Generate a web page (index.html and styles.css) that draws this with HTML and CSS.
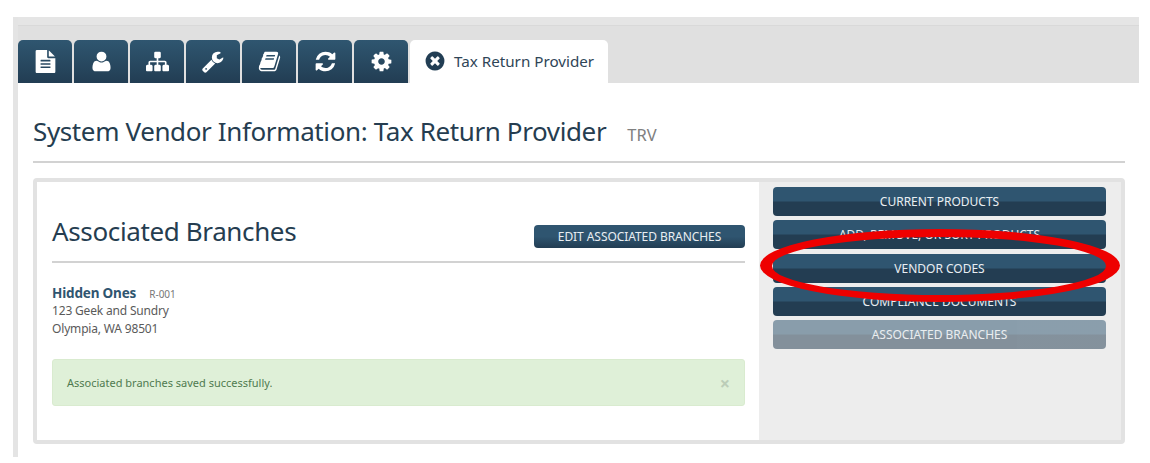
FILE: index.html
```html
<!DOCTYPE html>
<html lang="en">
<head>
<meta charset="utf-8">
<title>System Vendor Information</title>
<link rel="stylesheet" href="styles.css">
</head>
<body>
<div class="frame">
  <header class="tabbar">
    <div class="tabs">
      <a class="tab"><svg class="ico" viewBox="0 0 1792 1792"><path d="M1596 476q14 14 28 36h-472v-472q22 14 36 28zm-476 164h544v1056q0 40-28 68t-68 28h-1344q-40 0-68-28t-28-68v-1600q0-40 28-68t68-28h800v544q0 40 28 68t68 28zm160 736v-64q0-14-9-23t-23-9h-704q-14 0-23 9t-9 23v64q0 14 9 23t23 9h704q14 0 23-9t9-23zm0-256v-64q0-14-9-23t-23-9h-704q-14 0-23 9t-9 23v64q0 14 9 23t23 9h704q14 0 23-9t9-23zm0-256v-64q0-14-9-23t-23-9h-704q-14 0-23 9t-9 23v64q0 14 9 23t23 9h704q14 0 23-9t9-23z"/></svg></a>
      <a class="tab"><svg class="ico" viewBox="0 0 1792 1792"><path d="M1600 1405q0 120-73 189.500t-194 69.500h-874q-121 0-194-69.500t-73-189.500q0-53 3.500-103.500t14-109 26.500-108.500 43-97.500 62-81 85.500-53.500 111.500-20q9 0 42 21.500t74.500 48 108 48 133.500 21.500 133.500-21.500 108-48 74.500-48 42-21.500q61 0 111.500 20t85.500 53.500 62 81 43 97.500 26.500 108.500 14 109 3.500 103.500zm-320-893q0 159-112.500 271.500t-271.500 112.500-271.500-112.500-112.500-271.500 112.500-271.500 271.500-112.500 271.500 112.500 112.500 271.500z"/></svg></a>
      <a class="tab"><svg class="ico" viewBox="0 0 1792 1792"><path d="M1792 1248v320q0 40-28 68t-68 28h-320q-40 0-68-28t-28-68v-320q0-40 28-68t68-28h96v-192h-512v192h96q40 0 68 28t28 68v320q0 40-28 68t-68 28h-320q-40 0-68-28t-28-68v-320q0-40 28-68t68-28h96v-192h-512v192h96q40 0 68 28t28 68v320q0 40-28 68t-68 28h-320q-40 0-68-28t-28-68v-320q0-40 28-68t68-28h96v-192q0-52 38-90t90-38h512v-192h-96q-40 0-68-28t-28-68v-320q0-40 28-68t68-28h320q40 0 68 28t28 68v320q0 40-28 68t-68 28h-96v192h512q52 0 90 38t38 90v192h96q40 0 68 28t28 68z"/></svg></a>
      <a class="tab"><svg class="ico" viewBox="0 0 1792 1792"><path d="M384 1472q0-26-19-45t-45-19-45 19-19 45 19 45 45 19 45-19 19-45zm644-420l-682 682q-37 37-90 37-52 0-91-37l-106-108q-38-36-38-90 0-53 38-91l681-681q39 98 114.500 173.500t173.500 114.500zm634-435q0 39-23 106-47 134-164.500 217.500t-258.500 83.500q-185 0-316.500-131.500t-131.500-316.500 131.500-316.500 316.500-131.500q58 0 121.500 16.500t107.500 46.500q16 11 16 28t-16 28l-293 169v224l193 107q5-3 79-48.500t135.500-81 70.500-35.500q15 0 23.500 10t8.500 25z"/></svg></a>
      <a class="tab"><svg class="ico" viewBox="0 0 1792 1792"><path d="M1703 478q40 57 18 129l-275 906q-19 64-76.500 107.500t-122.500 43.500h-923q-77 0-148.500-53.500t-99.500-131.500q-24-67-2-127 0-4 3-27t4-37q1-8-3-21.500t-3-19.500q2-11 8-21t16.500-23.500 16.500-23.500q23-38 45-91.500t30-91.500q3-10 .5-30t-.5-28q3-11 17-28t17-23q21-36 42-92t25-90q1-9-2.500-32t.5-28q4-13 22-30.500t22-22.500q19-26 42.500-84.500t27.500-96.500q1-8-3-25.500t-2-26.500q2-8 9-18t18-23 17-21q8-12 16.500-30.500t15-35 16-36 19.500-32 26.500-23.500 36-11.500 47.500 5.500l-1 3q38-9 51-9h761q74 0 114 56t18 130l-274 906q-36 119-71.500 153.500t-128.500 34.500h-869q-27 0-38 15-11 16-1 43 24 70 144 70h923q29 0 56-15.500t35-41.500l300-987q7-22 5-57 38 15 59 43zm-1064 2q-4 13 2 22.500t20 9.500h608q13 0 25.500-9.500t16.500-22.500l21-64q4-13-2-22.500t-20-9.500h-608q-13 0-25.500 9.500t-16.500 22.500zm-83 256q-4 13 2 22.500t20 9.500h608q13 0 25.500-9.500t16.500-22.500l21-64q4-13-2-22.500t-20-9.500h-608q-13 0-25.500 9.500t-16.500 22.500z"/></svg></a>
      <a class="tab"><svg class="ico" viewBox="0 0 1792 1792"><path d="M1639 1056q0 5-1 7-64 268-268 434.500t-478 166.500q-146 0-282.500-55t-243.500-157l-129 129q-19 19-45 19t-45-19-19-45v-448q0-26 19-45t45-19h448q26 0 45 19t19 45-19 45l-137 137q71 66 161 102t187 36q134 0 250-65t186-179q11-17 53-117 8-23 30-23h192q13 0 22.500 9.500t9.500 22.500zm25-800v448q0 26-19 45t-45 19h-448q-26 0-45-19t-19-45 19-45l138-138q-148-137-349-137-134 0-250 65t-186 179q-11 17-53 117-8 23-30 23h-199q-13 0-22.500-9.500t-9.500-22.500v-7q65-268 270-434.500t480-166.500q146 0 284 55.500t245 156.500l130-129q19-19 45-19t45 19 19 45z"/></svg></a>
      <a class="tab"><svg class="ico" viewBox="0 0 1792 1792"><path d="M1152 896q0-106-75-181t-181-75-181 75-75 181 75 181 181 75 181-75 75-181zm512-109v222q0 12-8 23t-20 13l-185 28q-19 54-39 91 35 50 107 138 10 12 10 25t-9 23q-27 37-99 108t-94 71q-12 0-26-9l-138-108q-44 23-91 38-16 136-29 186-7 28-36 28h-222q-14 0-24.500-8.500t-11.500-21.500l-28-184q-49-16-90-37l-141 107q-10 9-25 9-14 0-25-11-126-114-165-168-7-10-7-23 0-12 8-23 15-21 51-66.500t54-70.500q-27-50-41-99l-183-27q-13-2-21-12.500t-8-23.500v-222q0-12 8-23t19-13l186-28q14-46 39-92-40-57-107-138-10-12-10-24 0-10 9-23 26-36 98.500-107.500t94.500-71.500q13 0 26 10l138 107q44-23 91-38 16-136 29-186 7-28 36-28h222q14 0 24.500 8.500t11.500 21.500l28 184q49 16 90 37l142-107q9-9 24-9 13 0 25 10 129 119 165 170 7 8 7 22 0 12-8 23-15 21-51 66.500t-54 70.500q26 50 41 98l183 28q13 2 21 12.500t8 23.500z"/></svg></a>
      <a class="tab tab-active">
        <svg class="close" viewBox="0 0 1792 1792"><path d="M1277 1122q0-26-19-45l-181-181 181-181q19-19 19-45 0-27-19-46l-90-90q-19-19-46-19-26 0-45 19l-181 181-181-181q-19-19-45-19-27 0-46 19l-90 90q-19 19-19 46 0 26 19 45l181 181-181 181q-19 19-19 45 0 27 19 46l90 90q19 19 46 19 26 0 45-19l181-181 181 181q19 19 45 19 27 0 46-19l90-90q19-19 19-46zm387-226q0 209-103 385.500t-279.500 279.500-385.500 103-385.500-103-279.500-279.500-103-385.500 103-385.500 279.500-279.500 385.500-103 385.500 103 279.500 279.500 103 385.500z"/></svg>
        <span>Tax Return Provider</span>
      </a>
    </div>
  </header>
  <main class="content">
    <div class="title-row">
      <h1>System Vendor Information: Tax Return Provider</h1>
      <span class="code">TRV</span>
    </div>
    <section class="panel">
      <div class="left">
        <div class="head">
          <h2>Associated Branches</h2>
          <a class="btn btn-edit">EDIT ASSOCIATED BRANCHES</a>
        </div>
        <div class="branch">
          <div class="branch-line"><strong>Hidden Ones</strong><small>R-001</small></div>
          <div class="branch-line">123 Geek and Sundry</div>
          <div class="branch-line">Olympia, WA 98501</div>
        </div>
        <div class="alert"><span>Associated branches saved successfully.</span><b class="x">×</b></div>
      </div>
      <nav class="right">
        <a class="btn">CURRENT PRODUCTS</a>
        <a class="btn">ADD, REMOVE, OR SORT PRODUCTS</a>
        <a class="btn">VENDOR CODES</a>
        <a class="btn">COMPLIANCE DOCUMENTS</a>
        <a class="btn btn-off">ASSOCIATED BRANCHES</a>
      </nav>
    </section>
  </main>
</div>
<svg class="ring" viewBox="0 0 1150 463"><path fill-rule="evenodd" d="M760 265.500A180 36.500 0 1 1 1120 265.500A180 36.500 0 1 1 760 265.500zM772 266A167 29 0 1 0 1106 266A167 29 0 1 0 772 266z"/></svg>
</body>
</html>
```
FILE: styles.css
```css
* { box-sizing: border-box; }
html, body { margin: 0; background: #fff; }
body { font-family: "Noto Sans", "Open Sans", sans-serif; color: #555; height: 463px; overflow: hidden; position: relative; }
.frame { margin: 17px 11px 0 13px; height: 440px; border-left: 5px solid #e4e4e4; }
.tabbar { height: 66px; background: #e0e0e0; padding-top: 15px; border-top: 8px solid #e5e5e5; box-shadow: inset 0 1px 0 #d9d9d9; }
.tabs { display: flex; gap: 2px; height: 43px; }
.tab { width: 54px; height: 43px; border-radius: 5px 5px 0 0; background: linear-gradient(#2f5670, #223d53); display: flex; align-items: center; justify-content: center; }
.ico { width: 23px; height: 23px; fill: #fff; }
.tab-active { width: 198px; background: #fff; justify-content: flex-start; gap: 8px; padding: 0 0 2px 14px; color: #2f4557; font-size: 15.200px; }
.close { width: 22px; height: 22px; fill: #223e54; }
.content { padding: 0 14px 0 15px; }
.title-row { height: 80px; display: flex; align-items: baseline; gap: 21px; padding-top: 30px; border-bottom: 2px solid #d2d2d2; }
h1 { margin: 0; font-size: 26px; font-weight: 400; color: #253d50; line-height: 36px; letter-spacing: -.38px; }
.code { font-size: 16.500px; color: #808080; }
.panel { margin-top: 15px; height: 266px; border: 4px solid #e2e2e2; border-radius: 4px; display: flex; background: #ededed; }
.left { width: 722px; background: #fff; padding: 0 14px 0 15px; }
.head { height: 81px; display: flex; justify-content: space-between; align-items: flex-start; border-bottom: 2px solid #d2d2d2; }
h2 { margin: 30px 0 0; font-size: 26px; font-weight: 400; color: #253d50; line-height: 38px; letter-spacing: -.37px; }
.btn { display: flex; align-items: center; justify-content: center; height: 29px; border-radius: 4px; color: #e9eef2; font-size: 12px; background: linear-gradient(#2f5570 48%, #233d52 52%); }
.btn-edit { margin-top: 43px; width: 211px; height: 23px; letter-spacing: -.07px; background: linear-gradient(#2f5570 50%, #223d53); }
.branch { margin-top: 21px; font-size: 12px; color: #5a5a5a; letter-spacing: -.17px; }
.branch-line { height: 18px; line-height: 18px; }
.branch strong { color: #2f5570; font-size: 13.500px; }
.branch small { font-size: 10px; margin-left: 13px; color: #777; letter-spacing: 0; }
.alert { margin-top: 21px; height: 47px; background: #dff0d8; border: 1px solid #d9ebcf; border-radius: 3px; padding: 0 14px; display: flex; align-items: center; justify-content: space-between; font-size: 11px; color: #4f7a4f; }
.x { color: #bccdb8; font-size: 18px; }
.right { flex: 1; display: flex; flex-direction: column; gap: 4.250px; padding: 5px 15px 5px 14px; }
.btn-off { opacity: .52; }
.ring { position: absolute; left: 0; top: 0; width: 1150px; height: 463px; pointer-events: none; fill: #ee0000; }
```
